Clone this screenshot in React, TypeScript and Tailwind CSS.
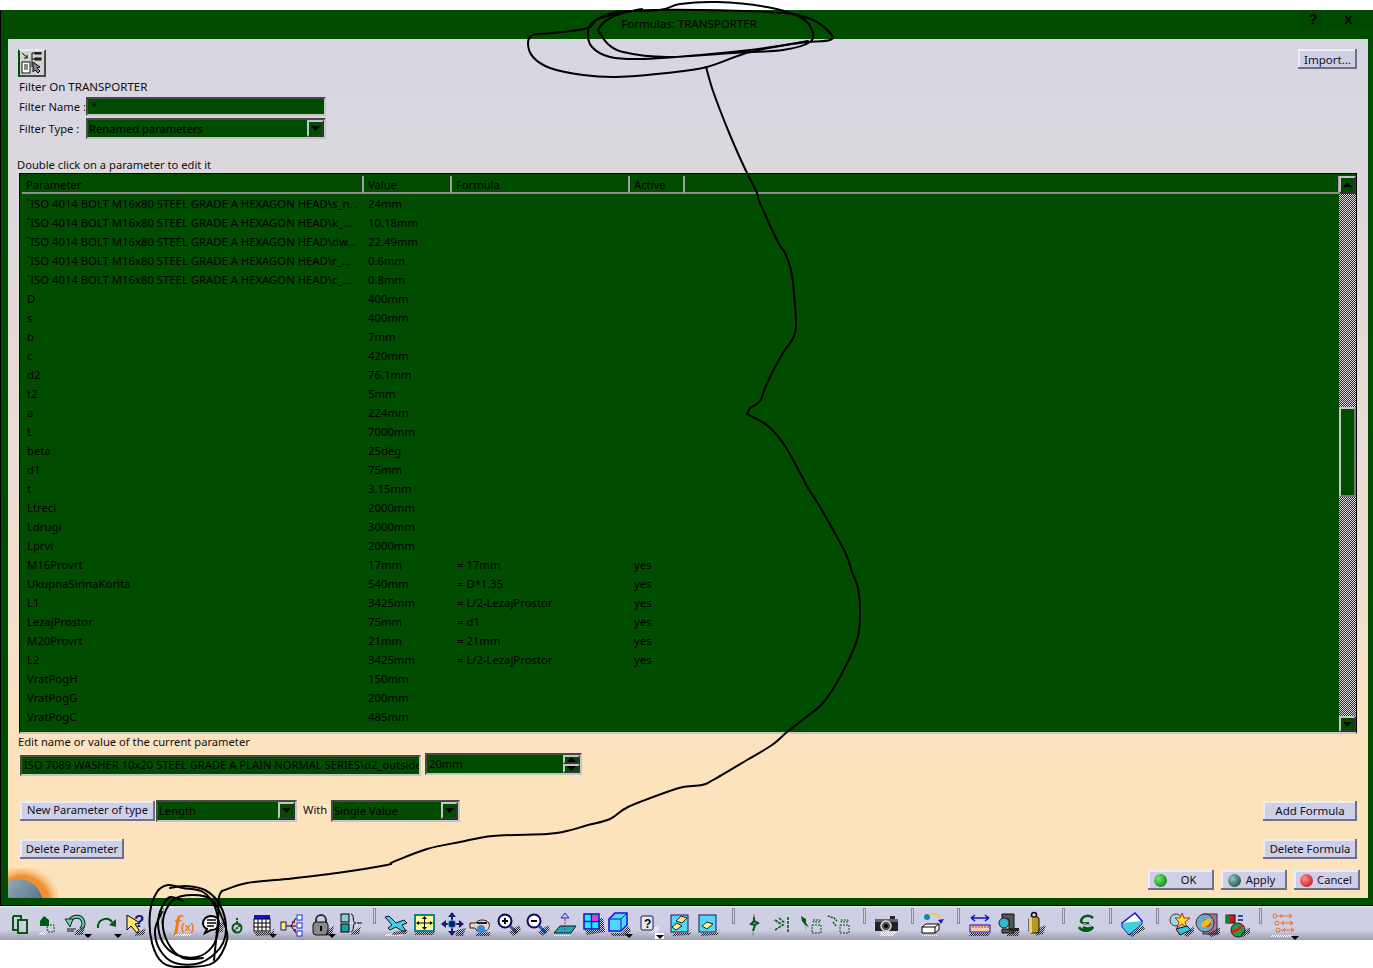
import React from 'react';

// rows of the parameter table
const rows: string[][] = [
  ['`ISO 4014 BOLT M16x80 STEEL GRADE A HEXAGON HEAD\\s_n...', '24mm', '', ''],
  ['`ISO 4014 BOLT M16x80 STEEL GRADE A HEXAGON HEAD\\k_...', '10.18mm', '', ''],
  ['`ISO 4014 BOLT M16x80 STEEL GRADE A HEXAGON HEAD\\dw...', '22.49mm', '', ''],
  ['`ISO 4014 BOLT M16x80 STEEL GRADE A HEXAGON HEAD\\r_...', '0.6mm', '', ''],
  ['`ISO 4014 BOLT M16x80 STEEL GRADE A HEXAGON HEAD\\c_...', '0.8mm', '', ''],
  ['D', '400mm', '', ''],
  ['s', '400mm', '', ''],
  ['b', '7mm', '', ''],
  ['c', '420mm', '', ''],
  ['d2', '76.1mm', '', ''],
  ['t2', '5mm', '', ''],
  ['a', '224mm', '', ''],
  ['L', '7000mm', '', ''],
  ['beta', '25deg', '', ''],
  ['d1', '75mm', '', ''],
  ['t', '3.15mm', '', ''],
  ['Ltreci', '2000mm', '', ''],
  ['Ldrugi', '3000mm', '', ''],
  ['Lprvi', '2000mm', '', ''],
  ['M16Provrt', '17mm', '= 17mm', 'yes'],
  ['UkupnaSirinaKorita', '540mm', '= D*1.35', 'yes'],
  ['L1', '3425mm', '= L/2-LezajProstor', 'yes'],
  ['LezajProstor', '75mm', '= d1', 'yes'],
  ['M20Provrt', '21mm', '= 21mm', 'yes'],
  ['L2', '3425mm', '= L/2-LezajProstor', 'yes'],
  ['VratPogH', '150mm', '', ''],
  ['VratPogG', '200mm', '', ''],
  ['VratPogC', '485mm', '', ''],
  ['', '60mm', '', ''],
];

const btn =
  'flex items-center justify-center h-[20px] whitespace-nowrap bg-[#cfcfe6] text-[#101028] shadow-[inset_-2px_-2px_0_#6f6f8c,inset_2px_2px_0_#ecebf8]';
const sunken = 'bg-[#004d00] border-2 border-t-[#4a4a4a] border-l-[#4a4a4a] border-r-[#c4c4c8] border-b-[#c4c4c8]';

const Arrow = ({ up = false, className = '' }: { up?: boolean; className?: string }) => (
  <div className={`flex items-center justify-center bg-[#004d00] border-2 border-t-[#c4c4c8] border-l-[#c4c4c8] border-r-[#333] border-b-[#333] ${className}`}>
    <svg width="9" height="5" viewBox="0 0 9 5">
      <polygon points={up ? '4.5,0 9,5 0,5' : '0,0 9,0 4.5,5'} fill="#000" />
    </svg>
  </div>
);

const Combo = ({ text, className }: { text: string; className: string }) => (
  <div className={`flex items-center justify-between pl-[1px] pr-0 text-black ${sunken} ${className}`}>
    <span className="pt-px">{text}</span>
    <Arrow className="w-[17px] h-[17px]" />
  </div>
);

const HeadCell = ({ text, className }: { text: string; className: string }) => (
  <div className={`h-[18px] pl-[4px] leading-[17px] text-black bg-[#004d00] border-r-2 border-b-2 border-r-[#a0a0a0] border-b-[#8c8c8c] ${className}`}>
    {text}
  </div>
);

const Ball = ({ from, to }: { from: string; to: string }) => (
  <span className={`w-[13px] h-[13px] rounded-full bg-radial-[at_35%_35%] ${from} ${to}`} />
);

const Sep = ({ className }: { className: string }) => (
  <div className={`w-[3px] h-[16px] shrink-0 bg-[#d4d4e0] border border-[#8a8a98] ${className}`} />
);

const Ico = ({ className = '', children }: { className?: string; children: React.ReactNode }) => (
  <svg width="28" height="32" viewBox="0 0 28 32" className={`shrink-0 overflow-visible ${className}`}>
    {children}
  </svg>
);

// dithered drop shadow used under every toolbar icon
const D = ({ p }: { p: string }) => <polygon points={p} fill="url(#dk)" />;
const W = ({ p }: { p: string }) => <polygon points={p} fill="url(#lt)" />;
const Tri = ({ x, y }: { x: number; y: number }) => (
  <polygon points={`${x},${y} ${x + 8},${y} ${x + 4},${y + 4}`} fill="#000" />
);

const G = '#005a10';

const Toolbar = () => (
  <div className="flex items-start h-[34px] pt-[2px] pl-[6px] bg-[linear-gradient(#e6e6f0_0,#cfcfe5_3px,#cdcde3_24px,#9f9fb2_34px)]">
    <svg className="absolute w-0 h-0">
      <defs>
        <pattern id="dk" width="2" height="2" patternUnits="userSpaceOnUse">
          <rect width="1" height="1" fill="#222" />
          <rect x="1" y="1" width="1" height="1" fill="#222" />
        </pattern>
        <pattern id="lt" width="2" height="2" patternUnits="userSpaceOnUse">
          <rect width="1" height="1" fill="#fff" />
          <rect x="1" y="1" width="1" height="1" fill="#fff" />
        </pattern>
        {/* scrollbar dither, two phases because the track pieces start on odd and even rows */}
        <pattern id="ckOdd" width="2" height="2" patternUnits="userSpaceOnUse">
          <rect width="2" height="2" fill="#004d00" />
          <rect width="1" height="1" fill="#dcd8dc" />
          <rect x="1" y="1" width="1" height="1" fill="#dcd8dc" />
        </pattern>
        <pattern id="ckEven" width="2" height="2" patternUnits="userSpaceOnUse">
          <rect width="2" height="2" fill="#004d00" />
          <rect x="1" width="1" height="1" fill="#dcd8dc" />
          <rect y="1" width="1" height="1" fill="#dcd8dc" />
        </pattern>
      </defs>
    </svg>
    <Ico>
      <path d="M7 8h8v3M7 8v14h4" fill="none" stroke={G} strokeWidth="2" />
      <rect x="12" y="12" width="9" height="13" fill="none" stroke={G} strokeWidth="2" />
    </Ico>
    <Ico className="-ml-px">
      <path d="M7 13l4-5 5 4v6h-9z" fill={G} />
      <path d="M14 17h7v7h-6z" fill="none" stroke={G} strokeDasharray="2 1" />
      <W p="8,24 14,24 12,27 6,27" />
    </Ico>
    <Ico className="ml-[2px]">
      <path d="M6 15c2-8 12-8 14-2 1 3 0 6-2 8" fill="none" stroke="#222" strokeWidth="4" />
      <path d="M6 15c2-8 12-8 14-2 1 3 0 6-2 8" fill="none" stroke="#5fd9a6" strokeWidth="2" />
      <polygon points="2,11 10,11 7,19" fill="#5fd9a6" stroke="#222" />
      <path d="M4 21h9M4 23h7" stroke="#111" />
      <D p="14,22 22,18 20,27 11,27" />
      <Tri x={21} y={26} />
    </Ico>
    <Ico className="ml-[2px]">
      <path d="M5 20c-1-9 10-12 14-6" fill="none" stroke={G} strokeWidth="2" />
      <polygon points="16,17 23,11 23,19" fill={G} />
      <Tri x={21} y={26} />
    </Ico>
    <Ico className="ml-px">
      <polygon points="5,7 5,22 9,18 15,25 17,22 13,16 18,15" fill="#ffe96a" stroke="#000" />
      <text x="12" y="19" fontFamily="Liberation Sans, sans-serif" fontWeight="700" fontSize="17" fill="#1a1a70">?</text>
      <D p="14,25 24,20 22,27 12,28" />
    </Ico>
    <Sep className="ml-[11px]" />
    <Ico className="ml-[6px]">
      <text x="4" y="23" fontFamily="Liberation Serif, serif" fontStyle="italic" fontWeight="700" fontSize="23" fill="#f47a10">f</text>
      <text x="11" y="23" fontFamily="Liberation Sans, sans-serif" fontWeight="700" fontSize="11" fill="#f47a10">(x)</text>
      <W p="6,26 22,26 20,28 4,28" />
    </Ico>
    <Ico className="-ml-px">
      <path d="M14 8c5 0 8 3 8 7s-3 7-8 7l-6 3 2-4c-2-1-4-3-4-6 0-4 4-7 8-7z" fill="#fff" stroke="#000" strokeWidth="2" />
      <path d="M10 12h9M10 15h9M10 18h7" stroke="#000" strokeWidth="1.5" />
      <D p="21,15 27,14 26,24 18,25" />
    </Ico>
    <Ico className="-ml-[3px]">
      <circle cx="15" cy="20" r="4.5" fill="none" stroke={G} strokeWidth="2" />
      <path d="M12 23l6-6M15 10v5" stroke={G} strokeWidth="2" strokeDasharray="2 1" />
    </Ico>
    <Ico className="-ml-[2px]">
      <rect x="6" y="7" width="16" height="4" fill="#1010e0" />
      <rect x="6" y="11" width="16" height="12" fill="#fff" stroke="#000" />
      <path d="M6 15h16M6 19h16M10 11v12M14 11v12M18 11v12" stroke="#000" />
      <D p="6,24 24,24 26,20 26,27 8,28" />
      <Tri x={21} y={26} />
    </Ico>
    <Ico className="ml-px">
      <rect x="4" y="14" width="5" height="8" fill="#ffe96a" stroke="#10108a" />
      <rect x="20" y="7" width="5" height="5" fill="#fff" stroke="#1030ff" />
      <rect x="20" y="15" width="5" height="5" fill="#fff" stroke="#1030ff" />
      <rect x="20" y="23" width="5" height="5" fill="#fff" stroke="#1030ff" />
      <path d="M9 18h10M14 18l5-8M14 18l5 7" stroke="#000" />
      <path d="M15 14h3M16 22h3" stroke="#c01818" strokeWidth="2" />
    </Ico>
    <Ico className="ml-[2px]">
      <path d="M9 15v-3a5 5 0 0 1 10 0v3" fill="none" stroke="#333" strokeWidth="2" />
      <rect x="6" y="14" width="15" height="13" rx="3" fill="#8a8a8a" stroke="#111" />
      <rect x="13" y="18" width="2" height="5" fill="#000" />
      <D p="20,22 27,18 25,27 18,28" />
      <Tri x={21} y={26} />
    </Ico>
    <Ico>
      <rect x="6" y="6" width="8" height="8" fill="#7fd0d0" stroke="#000" />
      <rect x="6" y="16" width="8" height="8" fill="#18a0a0" stroke="#000" />
      <path d="M16 6c3 0 2 7 3 8 1 1 2 1 2 1s-1 0-2 1c-1 1 0 8-3 8" fill="none" stroke="#000" />
      <path d="M22 15h5" stroke="#000" />
      <D p="18,24 26,18 24,26 16,27" />
    </Ico>
    <Sep className="ml-[10px]" />
    <Ico className="ml-[6px]">
      <polygon points="3,9 7,8 14,15 22,12 25,15 20,17 24,23 20,23 14,19 8,22 6,20 10,17" fill="#3fd0f0" stroke="#111" />
      <W p="4,26 22,25 20,28 2,28" />
      <D p="12,24 26,22 24,26 10,27" />
    </Ico>
    <Ico className="ml-px">
      <rect x="4" y="7" width="19" height="16" fill="#ffff90" stroke="#108090" strokeWidth="2" />
      <path d="M13.5 9v12M6 15h15" stroke="#000" />
      <polygon points="13.5,8 11,11 16,11" /><polygon points="13.5,22 11,19 16,19" />
      <polygon points="5,15 8,13 8,17" /><polygon points="22,15 19,13 19,17" />
      <D p="5,24 24,24 22,27 3,27" />
    </Ico>
    <Ico>
      <path d="M13 5v22M3 16h21" stroke="#1a1a70" strokeWidth="2" />
      <polygon points="13,4 9,9 17,9" fill="#1a1a70" /><polygon points="13,28 9,23 17,23" fill="#1a1a70" />
      <polygon points="2,16 7,12 7,20" fill="#1a1a70" /><polygon points="25,16 20,12 20,20" fill="#1a1a70" />
      <circle cx="13" cy="16" r="4" fill="#1a1a70" stroke="#40d0e0" />
      <D p="18,22 27,20 24,28 16,28" />
    </Ico>
    <Ico>
      <path d="M3 15h6c2-4 10-4 13 0 1 3 0 6-3 8H10l-2-3H3z" fill="#f8d0c0" stroke="#222" />
      <path d="M10 15h10" stroke="#222" strokeWidth="2" />
      <circle cx="14" cy="21" r="4" fill="#3090e0" />
      <D p="10,25 24,24 22,28 8,28" />
    </Ico>
    <Ico className="-ml-px">
      <circle cx="11" cy="13" r="6.5" fill="#fff" stroke="#0a0a50" strokeWidth="2" />
      <path d="M8 13h6M11 10v6" stroke="#000" strokeWidth="2" />
      <path d="M16 18l7 7" stroke="#2060c0" strokeWidth="3" />
      <D p="15,24 25,17 27,22 20,28" />
    </Ico>
    <Ico className="ml-px">
      <circle cx="11" cy="13" r="6.5" fill="#fff" stroke="#0a0a50" strokeWidth="2" />
      <path d="M8 13h6" stroke="#000" strokeWidth="2" />
      <path d="M16 18l7 7" stroke="#2060c0" strokeWidth="3" />
      <D p="15,24 25,17 27,22 20,28" />
    </Ico>
    <Ico>
      <polygon points="3,25 9,18 25,18 20,25" fill="#20a8b8" stroke="#111" />
      <path d="M14 22V9" stroke="#c81818" strokeDasharray="2 1" />
      <polygon points="14,5 10,10 18,10" fill="none" stroke="#2020d0" />
      <W p="3,27 20,27 18,28 2,28" />
    </Ico>
    <Ico>
      <rect x="5" y="6" width="15" height="15" fill="#20e8f8" stroke="#1010d0" strokeWidth="1.5" />
      <path d="M12.5 6v15M5 13.5h15" stroke="#1010d0" strokeWidth="1.5" />
      <rect x="13" y="7" width="6" height="6" fill="#e040c0" />
      <D p="20,10 24,10 26,24 8,27 6,22 20,22" />
    </Ico>
    <Ico className="-ml-px">
      <polygon points="3,11 9,5 21,5 21,17 15,23 3,23" fill="#50d8f8" stroke="#1010e0" strokeWidth="1.5" />
      <path d="M3 11h12v12M15 11l6-6" fill="none" stroke="#1010e0" />
      <D p="4,25 16,25 22,18 25,22 20,28 6,28" />
      <Tri x={19} y={26} />
    </Ico>
    <Ico className="ml-[2px]">
      <path d="M6 8h10l1 1v12l-1 1H6l-1-1V9z" fill="#e8e8f4" stroke="#1a1a50" />
      <text x="8" y="20" fontFamily="Liberation Sans, sans-serif" fontWeight="700" fontSize="12" fill="#000">?</text>
      <W p="18,20 23,17 22,24 14,25" />
      <rect x="19" y="25" width="9" height="6" fill="#fff" />
      <Tri x={20} y={27} />
    </Ico>
    <Ico className="ml-[2px]">
      <rect x="5" y="7" width="17" height="17" fill="#50d8f8" stroke="#1a1a50" />
      <polygon points="10,13 15,8 21,10 16,15" fill="#ffe080" stroke="#222" />
      <polygon points="6,19 11,15 16,18 10,22" fill="#fff090" stroke="#222" />
      <D p="8,25 24,25 26,19 24,27 6,28" />
    </Ico>
    <Ico>
      <rect x="5" y="7" width="17" height="17" fill="#50d8f8" stroke="#1a1a50" />
      <polygon points="8,18 13,14 19,16 13,21" fill="#fff4a0" stroke="#222" />
      <D p="8,25 24,25 26,19 24,27 6,28" />
    </Ico>
    <Sep className="ml-[10px]" />
    <Ico className="ml-[5px]">
      <path d="M14 8v5l-3 3 4 1-2 6M14 13l4 2-3 2" fill="none" stroke={G} strokeWidth="2" />
      <path d="M14 6v3M13 24v4" stroke="#9ba7a0" strokeWidth="2" />
    </Ico>
    <Ico className="ml-px">
      <path d="M6 12l8 5-8 5M10 10l6 5M19 9v15" fill="none" stroke={G} strokeWidth="1.5" strokeDasharray="3 1" />
      <path d="M4 12l7 5" stroke="#9ba7a0" />
    </Ico>
    <Ico className="-ml-px">
      <path d="M5 8l5 3v4l3 4-4-2-3-4z" fill={G} />
      <path d="M17 12h7v2h-7zM16 17h9v8h-9z" fill="none" stroke={G} strokeDasharray="2 1" />
      <path d="M10 18v4" stroke="#9ba7a0" />
    </Ico>
    <Ico>
      <path d="M4 8l6 2 3 3M9 14l3 4" fill="none" stroke={G} strokeDasharray="2 1" strokeWidth="1.5" />
      <path d="M17 12h7v2h-7zM16 17h9v8h-9z" fill="none" stroke={G} strokeDasharray="2 1" />
    </Ico>
    <Sep className="ml-[11px]" />
    <Ico className="ml-[7px]">
      <rect x="2" y="11" width="23" height="12" fill="#222" />
      <rect x="2" y="11" width="23" height="3" fill="#666" />
      <rect x="17" y="8" width="5" height="3" fill="#222" />
      <circle cx="13" cy="18" r="5" fill="#555" stroke="#ddd" strokeWidth="1.5" />
      <circle cx="13" cy="18" r="2" fill="#000" />
      <W p="8,24 24,23 20,28 6,28" />
    </Ico>
    <Sep className="ml-[10px]" />
    <Ico className="ml-[5px]">
      <circle cx="8" cy="9" r="3" fill="#1088b8" />
      <path d="M10 7c6-3 10-1 11 5" fill="none" stroke="#e8d020" strokeWidth="1.5" />
      <polygon points="19,12 25,11 22,16" fill="#1020c0" />
      <polygon points="3,19 7,16 20,16 20,22 16,25 3,25" fill="#fff" stroke="#000" />
      <path d="M3 19h13v6M16 19l4-3" fill="none" stroke="#000" />
      <W p="4,27 20,27 18,28 2,28" />
    </Ico>
    <Sep className="ml-[10px]" />
    <Ico className="ml-[6px]">
      <path d="M5 10h18M5 10l4-3M5 10l4 3M23 10l-4-3M23 10l-4 3" fill="none" stroke="#1010c0" strokeWidth="1.5" />
      <rect x="4" y="17" width="20" height="7" fill="#f8c8b0" stroke="#1010a0" />
      <path d="M7 17v3M10 17v3M13 17v3M16 17v3M19 17v3M22 17v3" stroke="#b03030" />
      <D p="5,25 24,25 22,28 3,28" />
    </Ico>
    <Ico>
      <path d="M8 6h12v19H8v-4h7V11H8z" fill="#555" stroke="#111" />
      <circle cx="10" cy="15" r="5" fill="#30b8d0" stroke="#222" />
      <rect x="15" y="20" width="10" height="3" fill="#222" />
      <D p="16,24 26,22 24,28 12,28" />
    </Ico>
    <Ico className="-ml-px">
      <circle cx="13" cy="7" r="2.5" fill="none" stroke="#111" strokeWidth="1.5" />
      <rect x="8" y="9" width="10" height="16" rx="2" fill="#b89820" stroke="#111" />
      <rect x="8" y="9" width="3" height="16" fill="#e0d080" />
      <D p="18,20 25,17 22,26 14,28" />
    </Ico>
    <Sep className="ml-[13px]" />
    <Ico className="ml-[7px]">
      <path d="M21 10c-4-4-11-2-12 3 0 2 4 3 8 2" fill="none" stroke={G} strokeWidth="2.5" />
      <path d="M7 19c3 5 11 5 14 0-3 2-8 2-10 0" fill="none" stroke={G} strokeWidth="2.5" />
      <path d="M11 15l8 3" stroke="#9ba7a0" />
    </Ico>
    <Sep className="ml-[9px]" />
    <Ico className="ml-[6px]">
      <polygon points="4,15 17,5 24,13 11,24" fill="#fff" stroke="#1010e0" strokeWidth="1.5" />
      <path d="M4 15v4l7 8 13-11v-3" fill="#40d0d8" stroke="#1010e0" />
      <D p="11,27 25,17 27,21 14,29" />
    </Ico>
    <Sep className="ml-[10px]" />
    <Ico className="ml-[8px]">
      <circle cx="9" cy="12" r="6" fill="#9fd8e8" stroke="#333" />
      <polygon points="15,5 17,10 23,10 18,14 20,20 15,16 10,20 12,14 8,10 13,10" fill="#ffe020" stroke="#c02020" />
      <polygon points="9,21 20,18 24,22 13,27" fill="#30c8e0" stroke="#111" />
      <D p="17,27 27,18 27,24 20,29" />
    </Ico>
    <Ico className="-ml-[2px]">
      <rect x="10" y="6" width="14" height="20" fill="#b07090" stroke="#333" />
      <circle cx="12" cy="15" r="9" fill="#70a8c8" stroke="#333" />
      <circle cx="14" cy="15" r="4" fill="#f03010" />
      <ellipse cx="13" cy="15" rx="6" ry="3" fill="#e8c020" transform="rotate(-40 13 15)" />
      <D p="14,26 27,19 27,26 18,29" />
    </Ico>
    <Ico className="ml-[2px]">
      <rect x="3" y="7" width="9" height="8" fill="#d01818" stroke="#111" />
      <rect x="3" y="7" width="4" height="8" fill="#108030" />
      <path d="M15 8h5M20 12h-5" stroke="#1a1a70" strokeWidth="1.5" />
      <circle cx="15" cy="22" r="7" fill="#18a048" stroke="#222" />
      <path d="M9 24c4-1 8-4 11-7" stroke="#e02020" strokeWidth="3" />
      <D p="18,25 27,19 27,25 18,30" />
    </Ico>
    <Sep className="ml-[8px]" />
    <Ico className="ml-[7px]">
      <circle cx="6" cy="8" r="2" fill="none" stroke="#e87020" /><circle cx="8" cy="15" r="2" fill="none" stroke="#e87020" /><circle cx="9" cy="22" r="2" fill="none" stroke="#e87020" />
      <path d="M9 8h14M11 15h13M12 22h13M13 6l-2 2 2 2M20 6l3 2-3 2M15 13l-2 2 2 2M21 13l3 2-3 2M16 20l-2 2 2 2M22 20l3 2-3 2" fill="none" stroke="#e87020" />
      <W p="3,27 24,27 22,29 1,29" />
      <Tri x={22} y={28} />
    </Ico>
  </div>
);

// catmull-rom through the hand drawn points, so the pen strokes stay round
const smooth = (pts: number[][]) => {
  let d = `M${pts[0][0]} ${pts[0][1]}`;
  for (let i = 0; i < pts.length - 1; i++) {
    const p0 = pts[i - 1] || pts[i];
    const p1 = pts[i];
    const p2 = pts[i + 1];
    const p3 = pts[i + 2] || p2;
    d += `C${p1[0] + (p2[0] - p0[0]) / 6} ${p1[1] + (p2[1] - p0[1]) / 6} ${p2[0] - (p3[0] - p1[0]) / 6} ${p2[1] - (p3[1] - p1[1]) / 6} ${p2[0]} ${p2[1]}`;
  }
  return d;
};

const strokes: number[][][] = [
  [[642,9],[600,18],[588,28],[553,33],[533,35],[528,43],[533,57],[550,68],[583,75],[617,77],[667,73],[707,67],[750,52],[808,41]],
  [[598,30],[607,43],[623,52],[667,57],[733,53],[783,50],[810,42],[812,30],[800,17],[767,7],[717,2],[680,4],[660,10],[617,12],[593,22],[588,33],[592,47],[610,57],[643,59],[700,55],[750,50],[800,43],[830,40],[830,33],[813,20],[783,13],[700,10],[633,11],[607,20],[598,30]],
  [[706,67],[712,88],[720,110],[730,135],[740,158],[748,175],[757,193],[760,203],[778,242],[785,253],[791,270],[794,293],[796,327],[792,340],[783,353],[772,373],[765,388],[760,401],[750,408]],
  [[750,408],[747,414]],
  [[747,414],[768,426],[783,443],[797,467],[808,488],[820,507],[845,552],[852,572],[858,588],[860,613],[857,640],[840,677],[823,703],[805,718],[787,732],[772,745],[747,760],[713,780],[702,785],[683,787],[667,792],[628,807],[610,819],[588,825],[567,831],[547,834],[493,836],[460,842],[427,849],[393,862],[387,865],[337,873],[287,879],[247,883],[222,891]],
  [[222,891],[219,897],[218,920],[214,960]],
  [[183,901],[170,897],[162,907],[158,923],[163,943],[177,955],[197,957],[212,947],[218,930],[215,907],[203,892],[183,888],[168,885],[157,892],[150,913],[152,943],[163,963],[183,967],[213,963],[227,940],[223,920],[212,900],[193,895],[173,900],[163,920],[168,943],[183,958],[203,958]],
  [[162,912],[155,930],[160,950],[175,963],[200,963],[220,948],[226,928],[220,905],[205,890],[185,886],[170,888]],
];

const Scribble = () => (
  <svg className="absolute inset-0 pointer-events-none" width="1373" height="968" viewBox="0 0 1373 968" fill="none" stroke="#000" strokeWidth="2" strokeLinejoin="round" strokeLinecap="round">
    {strokes.map((s, i) => (
      <path key={i} d={smooth(s)} />
    ))}
  </svg>
);

export default function App() {
  return (
    <div className="relative w-[1373px] h-[968px] overflow-hidden bg-white pt-[10px] text-[11.2px] text-[#101010] font-['Noto_Sans',sans-serif]">
      <div className="bg-[#004d00] border-l border-b border-l-black border-b-black pl-[7px] pr-[5px] pb-[7px]">
        {/* title bar */}
        <div className="relative flex items-center h-[29px] justify-center text-black pl-[2px] text-[11.5px]">
          <span className="pb-[1px]">Formulas: TRANSPORTER</span>
          <div className="absolute right-[-5px] top-0 flex gap-[4px] h-[19px] font-bold font-['Liberation_Sans',sans-serif] text-[14px]">
            <span className="flex items-center justify-center w-[22px] pl-[4px] bg-[#004700]">?</span>
            <span className="flex items-center justify-center w-[47px] pr-[2px] bg-[#004700]">x</span>
          </div>
        </div>

        {/* dialog body */}
        <div className="relative flex flex-col h-[859px] pl-[11px] pr-[11px] bg-[linear-gradient(#d6d6e2_0%,#ddd8dc_20%,#f1dfcd_65%,#fce3bc_85%)]">
          <div className="flex justify-between items-start pt-[10px]">
            <div className="w-[28px] h-[28px] -ml-px flex items-center justify-center bg-[#cfd4cf] border-2 border-t-[#e8e8f0] border-l-[#004d00] border-r-[#4a4a4a] border-b-[#4a4a4a]">
              <svg width="22" height="22" viewBox="0 0 22 22" fill="none" stroke="#111">
                <path d="M1 1l6 5M6 3v3H3M11 1v14M11 1h7M11 7h7" />
                <rect x="14" y="0" width="6" height="2" fill="#333" />
                <rect x="14" y="6" width="6" height="2" fill="#333" />
                <rect x="1" y="10" width="8" height="11" fill="#fff" />
                <path d="M3 13h4M3 15h4M3 17h4" />
                <polygon points="12,10 12,20 14,18 17,21 19,19 16,16 19,15" fill="#808090" />
              </svg>
            </div>
            <div className={`${btn} w-[59px] pt-px text-[11.5px]`}>Import...</div>
          </div>

          <div className="h-[17px] mt-[1px] leading-[17px] whitespace-nowrap text-[11.5px]">Filter On TRANSPORTER</div>
          <div className="flex items-center mt-[2px] h-[19px] whitespace-nowrap">
            <span className="w-[67px] pt-px">Filter Name :</span>
            <div className={`w-[240px] h-[19px] pl-[3px] text-black leading-[14px] ${sunken}`}>*</div>
          </div>
          <div className="flex items-center mt-[2px] h-[21px] whitespace-nowrap">
            <span className="w-[67px] pt-px">Filter Type :</span>
            <Combo text="Renamed parameters" className="w-[240px] h-[21px]" />
          </div>

          <div className="h-[17px] -ml-[2px] mt-[17px] leading-[17px]">Double click on a parameter to edit it</div>

          {/* parameter table */}
          <div className="flex flex-col h-[561px] border border-black border-b-2 border-b-[#c8c8c8] bg-[#004d00] text-black">
            <div className="flex h-[20px] shrink-0 pt-[2px] pl-[2px]">
              <HeadCell text="Parameter" className="w-[342px]" />
              <HeadCell text="Value" className="w-[88px]" />
              <HeadCell text="Formula" className="w-[178px]" />
              <HeadCell text="Active" className="w-[55px]" />
              <HeadCell text="" className="w-[655px]" />
              <Arrow up className="w-[17px] h-[17px] ml-[-1px]" />
            </div>
            <div className="flex flex-1 min-h-0">
              <div className="flex-1 overflow-hidden pl-[7px] text-[11.3px]">
                {rows.map((r, i) => (
                  <div key={i} className="grid grid-cols-[341px_89px_177px_1fr] h-[19px] leading-[19px] whitespace-nowrap">
                    {r.map((c, j) => (
                      <span key={j} className="overflow-hidden">{c}</span>
                    ))}
                  </div>
                ))}
              </div>
              <div className="flex flex-col w-[17px] shrink-0">
                <svg className="block w-full h-[213px] shrink-0">
                  <rect width="100%" height="100%" fill="url(#ckEven)" />
                </svg>
                <div className="h-[90px] shrink-0 bg-[#004d00] border-2 border-t-[#c4c4c8] border-l-[#c4c4c8] border-r-[#777] border-b-[#777]" />
                <svg className="block w-full flex-1 min-h-0">
                  <rect width="100%" height="100%" fill="url(#ckOdd)" />
                </svg>
                <Arrow className="h-[16px] shrink-0" />
              </div>
            </div>
          </div>

          <div className="h-[17px] -ml-px -mt-px leading-[17px]">Edit name or value of the current parameter</div>
          <div className="flex items-start mt-[3px]">
            <div className={`w-[401px] h-[21px] mt-[2px] ml-[1px] overflow-hidden whitespace-nowrap text-black pl-[2px] leading-[16px] ${sunken}`}>
              ISO 7089 WASHER 10x20 STEEL GRADE A PLAIN NORMAL SERIES\d2_outside_diameter
            </div>
            <div className={`flex items-center justify-between w-[157px] h-[22px] ml-[4px] pl-[2px] text-black ${sunken}`}>
              <span>20mm</span>
              <div className="flex flex-col w-[17px]">
                <Arrow up className="h-[9px]" />
                <Arrow className="h-[9px]" />
              </div>
            </div>
          </div>

          <div className="flex items-center justify-between mt-[24px] h-[21px] whitespace-nowrap">
            <div className="flex items-center ml-px">
              <div className={`${btn} w-[135px]`}>New Parameter of type</div>
              <Combo text="Length" className="w-[141px] h-[22px] ml-px" />
              <span className="ml-[6px] w-[28px]">With</span>
              <Combo text="Single Value" className="w-[129px] h-[22px]" />
            </div>
            <div className={`${btn} w-[94px] text-[11.5px]`}>Add Formula</div>
          </div>

          <div className="flex items-center justify-between mt-[18px] h-[20px]">
            <div className={`${btn} w-[104px] ml-px`}>Delete Parameter</div>
            <div className={`${btn} w-[94px]`}>Delete Formula</div>
          </div>

          <div className="flex justify-end gap-[7px] mt-[11px] -mr-[3px]">
            <div className={`${btn} w-[66px] gap-[14px] pr-[12px]`}>
              <Ball from="from-[#70f070]" to="to-[#00600c]" />
              <span>OK</span>
            </div>
            <div className={`${btn} w-[66px] gap-[5px] pr-[5px]`}>
              <Ball from="from-[#90c8bc]" to="to-[#003028]" />
              <span>Apply</span>
            </div>
            <div className={`${btn} w-[66px] gap-[4px] pr-[2px]`}>
              <Ball from="from-[#ff9090]" to="to-[#b00000]" />
              <span>Cancel</span>
            </div>
          </div>

          {/* corner logo */}
          <svg className="absolute left-0 bottom-0" width="50" height="30" viewBox="0 0 50 30">
            <defs>
              <radialGradient id="glow" cx="14" cy="36" r="42" gradientUnits="userSpaceOnUse">
                <stop offset="0.66" stopColor="#f09030" />
                <stop offset="1" stopColor="#fce3bc" stopOpacity="0" />
              </radialGradient>
              <linearGradient id="globe" x1="0" y1="0" x2="1" y2="1">
                <stop offset="0" stopColor="#a8b8bc" />
                <stop offset="1" stopColor="#305878" />
              </linearGradient>
            </defs>
            <rect width="50" height="30" fill="url(#glow)" />
            <circle cx="10" cy="36" r="25" fill="url(#globe)" />
          </svg>
        </div>
      </div>

      <Toolbar />
      <Scribble />
    </div>
  );
}
